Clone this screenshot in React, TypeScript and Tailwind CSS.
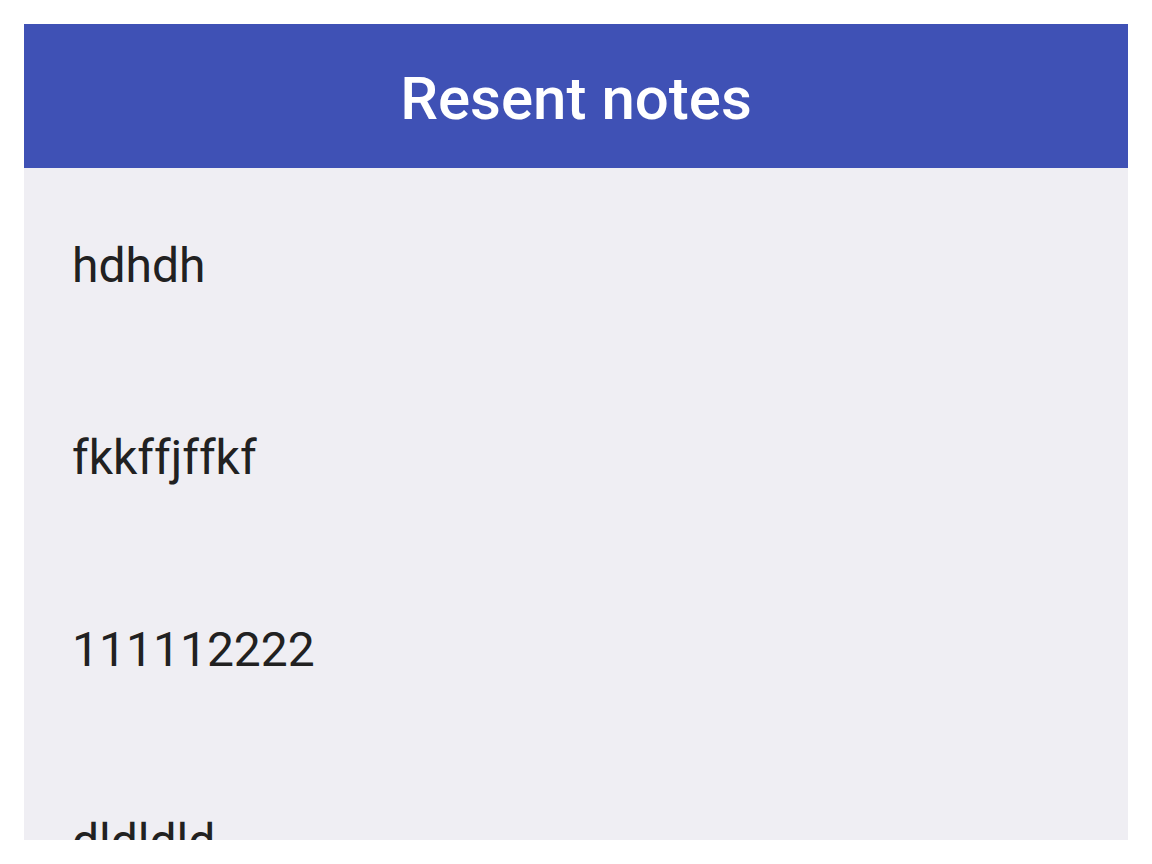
import React from 'react';

const notes = ['hdhdh', 'fkkffjffkf', '111112222', 'dldldld', 'qwerty'];

export default function App() {
  return (
    <div className="h-screen bg-white p-6" style={{ fontFamily: 'Roboto, "Noto Sans", sans-serif' }}>
      <div className="flex h-full flex-col overflow-hidden bg-[#efeef3]">
        <header className="flex h-[144px] shrink-0 items-center justify-center bg-[#3f51b5] pt-[5px]">
          <h1 className="text-[60px] font-medium leading-none text-white">Resent notes</h1>
        </header>
        <ul className="flex flex-col">
          {notes.map((note) => (
            <li key={note} className="flex h-[192px] shrink-0 items-center px-12 pt-1 text-[48px] leading-none text-[#212121]">
              {note}
            </li>
          ))}
        </ul>
      </div>
    </div>
  );
}
